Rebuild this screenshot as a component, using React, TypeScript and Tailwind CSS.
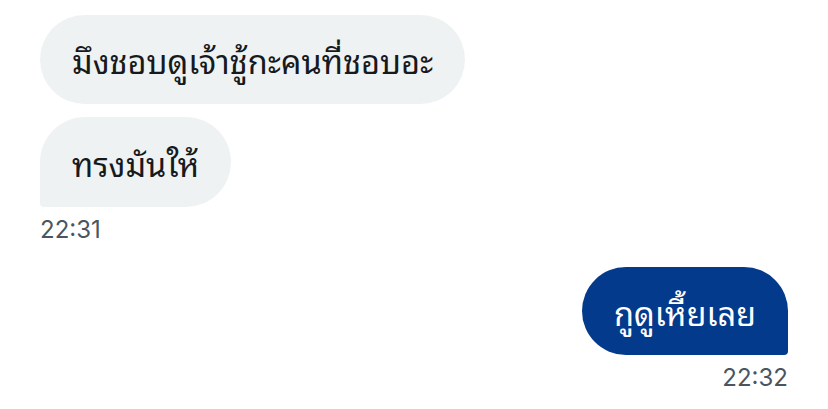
import React from "react";

export default function App() {
  return (
    <div className="w-[828px] h-[409px] bg-white flex flex-col px-[40px] pt-[15px]">
      <div className="flex flex-col items-start gap-[13px] font-['Noto_Sans_Thai_Looped','Loma','Garuda','Noto_Sans_Thai',sans-serif] text-[32.5px]">
        <div className="bg-[#eff2f3] rounded-[45px] h-[89px] px-[32px] flex items-center text-[#161a1d]">
          มึงชอบดูเจ้าชู้กะคนที่ชอบอะ
        </div>
        <div className="bg-[#eff2f3] rounded-[45px] rounded-bl-[4px] h-[90px] px-[32px] flex items-center text-[#161a1d]">
          ทรงมันให้
        </div>
      </div>
      <div className="mt-[8px] text-[24px] leading-[30px] text-[#4a5560] font-['Inter','Liberation_Sans',sans-serif]">
        22:31
      </div>
      <div className="flex flex-col items-end mt-[22px]">
        <div className="bg-[#033a8c] rounded-[45px] rounded-br-[4px] h-[88px] px-[32px] flex items-center text-[32.5px] text-white font-['Noto_Sans_Thai_Looped','Loma','Garuda','Noto_Sans_Thai',sans-serif]">
          กูดูเหี้ยเลย
        </div>
        <div className="mt-[8px] text-[24px] leading-[30px] text-[#4a5560] font-['Inter','Liberation_Sans',sans-serif]">
          22:32
        </div>
      </div>
    </div>
  );
}
